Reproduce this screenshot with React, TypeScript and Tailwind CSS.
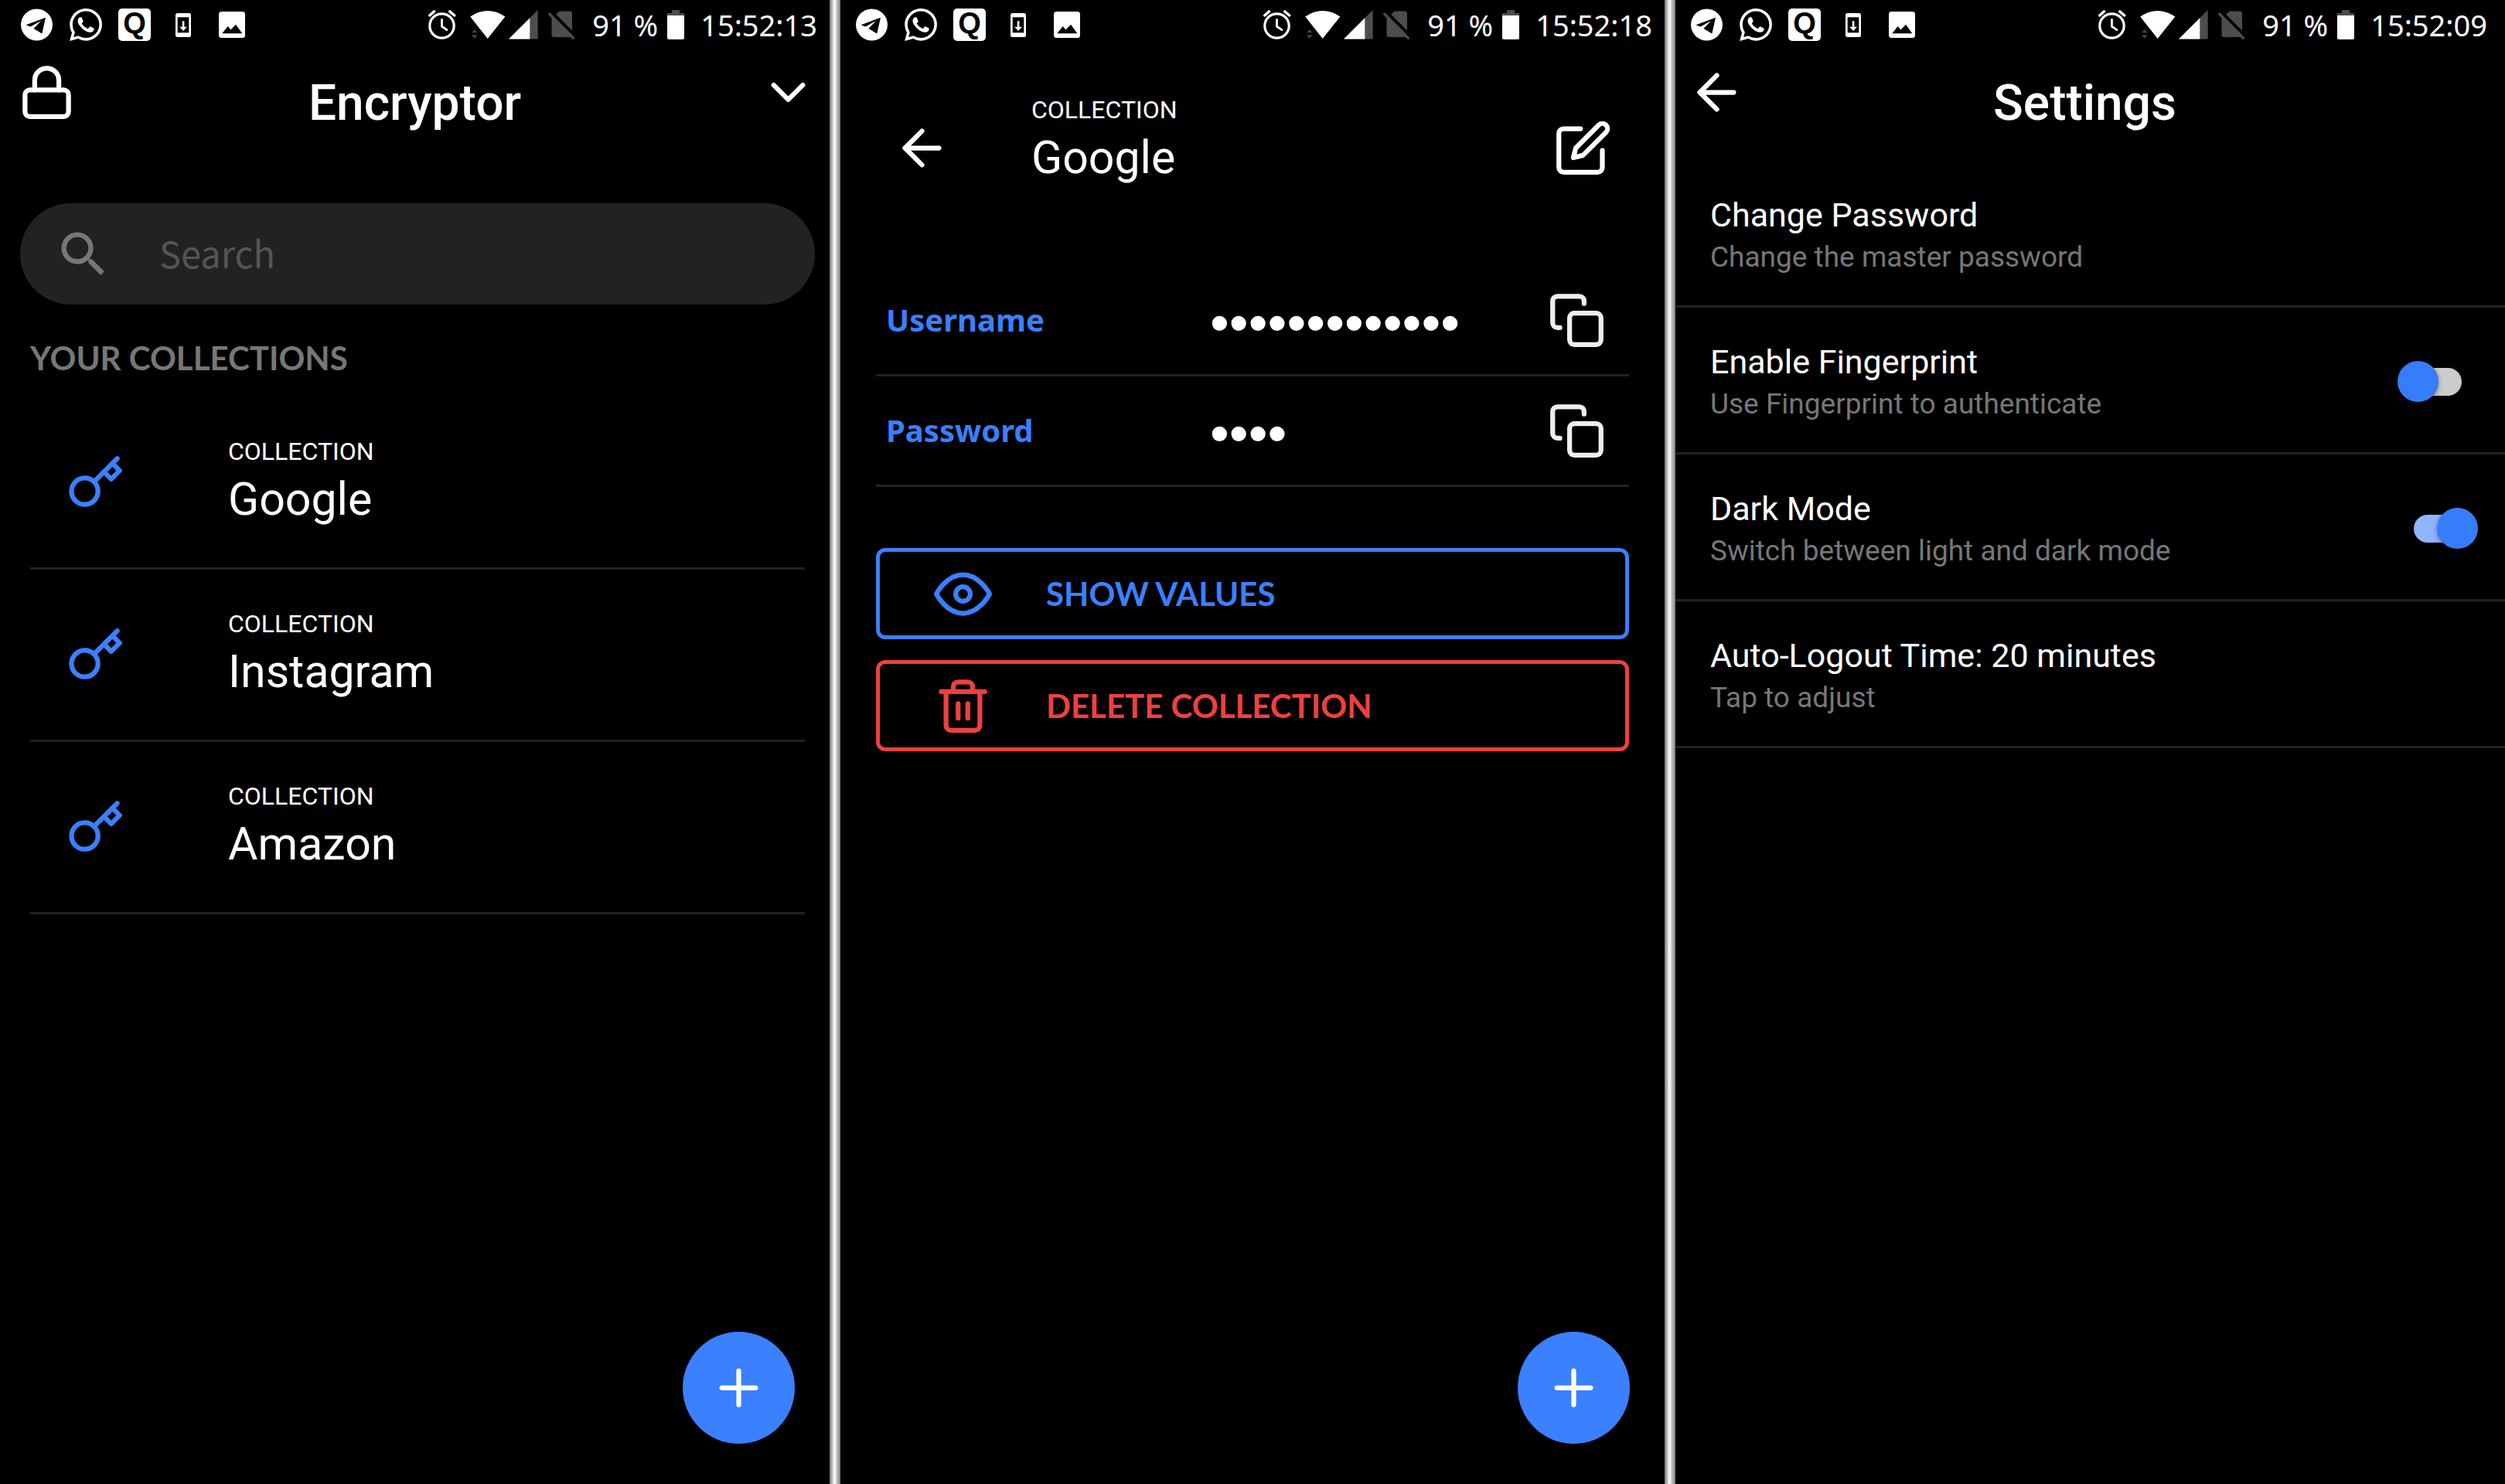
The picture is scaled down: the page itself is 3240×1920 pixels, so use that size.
import React from 'react';
import type { ReactNode } from 'react';
import { FiArrowLeft, FiChevronDown, FiCopy, FiEdit, FiEye, FiKey, FiLock, FiPlus, FiTrash2 } from 'react-icons/fi';
import { MdSearch } from 'react-icons/md';
import { SiWhatsapp } from 'react-icons/si';

const ICON = 'size-[75px] shrink-0';

function TelegramIcon() {
  return (
    <svg viewBox="0 0 42 42" className="size-[42px]" aria-hidden="true">
      <circle cx="20.5" cy="21" r="20.5" fill="#fff" />
      <path d="M6.5 21.3 32 11.7 27.3 32.5 16.5 26 26 16 12.5 23.6Z" fill="#000" />
    </svg>
  );
}

function DownloadIcon() {
  return (
    <svg viewBox="0 0 20 31" className="h-[31px] w-5" aria-hidden="true">
      <rect width="20" height="31" rx="2.5" fill="#fff" />
      <rect x="2.7" y="5.3" width="14.6" height="20" fill="#000" />
      <path d="M8.8 10.3h2.6v7.4H15L10.1 23 5.2 17.7h3.6Z" fill="#fff" />
    </svg>
  );
}

function ImageIcon() {
  return (
    <svg viewBox="0 0 34 34" className="size-[34px]" aria-hidden="true">
      <rect width="34" height="34" rx="3.5" fill="#fff" />
      <path d="M4.3 28.3 11.7 19l3.8 4.6L22 16.7l8.3 11.6Z" fill="#000" />
    </svg>
  );
}

function AlarmIcon() {
  return (
    <svg viewBox="0 0 36 38" className="h-[38px] w-9" fill="none" stroke="#fff" strokeLinecap="round" aria-hidden="true">
      <circle cx="17.5" cy="20.5" r="15.7" strokeWidth="3.2" />
      <path d="M17.5 12.5v8.7l6.5 4.5" strokeWidth="2.8" />
      <path d="M1.7 7 7.5 1.9M27.7 1.9 33.8 7" strokeWidth="3.4" />
    </svg>
  );
}

function WifiIcon() {
  return (
    <svg viewBox="0 0 46 38" className="h-[38px] w-[46px]" aria-hidden="true">
      <path d="M.2 8.4Q22.7-6.4 45.4 8.4L22.7 37Z" fill="#fff" />
      <path d="m5.7 25.3 4 4H1.9ZM1.9 32.3h7.8l-4 4.4Z" fill="#444" />
    </svg>
  );
}

function SignalIcon() {
  return (
    <svg viewBox="0 0 38 38" className="size-[38px]" aria-hidden="true">
      <path d="M0 37.5 37.6 0v37.5Z" fill="#4d4d4d" />
      <path d="M0 37.5 27.3 10.2v27.3Z" fill="#fff" />
    </svg>
  );
}

function NoSimIcon() {
  return (
    <svg viewBox="0 0 34 38" className="h-[38px] w-[34px]" aria-hidden="true">
      <path d="M4.5 11.5 14 2q.6-.5 1.5-.5H28q3 0 3 3V32q0 3-3 3H7.5q-3 0-3-3Z" fill="#4d4d4d" />
      <path d="M3 1.5 35 33.4" stroke="#000" strokeWidth="4" />
      <path d="M1.8 5.3 32.3 36.2" stroke="#4d4d4d" strokeWidth="3.4" strokeLinecap="round" />
    </svg>
  );
}

function BatteryIcon() {
  return (
    <svg viewBox="0 0 22 38" className="h-[38px] w-[22px]" aria-hidden="true">
      <path d="M6 0h10v4h6v4H0V4h6Z" fill="#4d4d4d" />
      <path d="M0 7h22v29q0 2-2 2H2q-2 0-2-2Z" fill="#fff" />
    </svg>
  );
}

function StatusBar({ time }: { time: string }) {
  return (
    <div className="flex h-16 items-center justify-between pr-[23px] pl-[27px]">
      <div className="flex items-center gap-[21px]">
        <TelegramIcon />
        <SiWhatsapp className="size-[42px]" />
        <span className="flex size-[42px] items-center justify-center rounded-[5px] bg-white pb-1 font-['Liberation_Sans'] text-[38px] leading-none font-bold text-black">
          Q
        </span>
        <span className="flex w-[42px] justify-center">
          <DownloadIcon />
        </span>
        <span className="flex w-[42px] justify-center">
          <ImageIcon />
        </span>
      </div>
      <div className="flex items-center font-['Noto_Sans'] text-[38px] leading-none">
        <AlarmIcon />
        <span className="ml-[18px] flex gap-1">
          <WifiIcon />
          <SignalIcon />
        </span>
        <span className="ml-[13px]">
          <NoSimIcon />
        </span>
        <span className="ml-[23px]">91 %</span>
        <span className="ml-3">
          <BatteryIcon />
        </span>
        <time className="ml-[21px]">{time}</time>
      </div>
    </div>
  );
}

function Phone({ time, children }: { time: string; children: ReactNode }) {
  return (
    <section className="flex min-w-0 flex-1 flex-col">
      <StatusBar time={time} />
      {children}
    </section>
  );
}

function Separator() {
  return (
    <div className="z-10 -mx-[7px] w-[14px] shrink-0 bg-linear-to-r from-[#777] via-white via-45% to-[#777]" />
  );
}

function TitleBar({ title, left, right }: { title: string; left: ReactNode; right?: ReactNode }) {
  return (
    <header className="grid grid-cols-[75px_1fr_75px] items-start px-[23px] pt-[18px]">
      {left}
      <h1 className="pt-3 pr-[7px] text-center text-[64px] leading-[80px] font-medium">{title}</h1>
      {right}
    </header>
  );
}

function CollectionName({ name }: { name: string }) {
  return (
    <span className="flex flex-col gap-2 pb-1 text-left">
      <span className="text-[32px] leading-10">COLLECTION</span>
      <span className="text-[59px] leading-[68px]">{name}</span>
    </span>
  );
}

function AddButton() {
  return (
    <button
      aria-label="Add"
      className="mt-auto mr-[52px] mb-[52px] flex size-[145px] items-center justify-center self-end rounded-full bg-[#3a80ff]"
    >
      <FiPlus className={ICON} />
    </button>
  );
}

function CollectionsScreen() {
  return (
    <Phone time="15:52:13">
      <TitleBar
        title="Encryptor"
        left={
          <button aria-label="Lock">
            <FiLock className={ICON} />
          </button>
        }
        right={
          <button aria-label="More">
            <FiChevronDown className={ICON} />
          </button>
        }
      />
      <label className="mx-[26px] mt-[89px] flex h-[131px] items-center gap-[60px] rounded-full bg-[#222] px-11">
        <MdSearch className="size-[76px] shrink-0 text-[#777]" />
        <input
          type="search"
          aria-label="Search"
          placeholder="Search"
          className="min-w-0 flex-1 bg-transparent pb-1 font-['Noto_Sans_CJK_SC',sans-serif] text-[47px] leading-[60px] outline-none placeholder:text-[#555]"
        />
      </label>
      <h2 className="mx-[39px] mt-[44px] mb-[26px] font-['Lato'] text-[42px] leading-[50px] font-bold text-[#777]">
        YOUR COLLECTIONS
      </h2>
      <ul className="mx-[39px]">
        {['Google', 'Instagram', 'Amazon'].map((name) => (
          <li key={name} className="border-b-[3px] border-[#222]">
            <button className="flex w-full items-center gap-[134px] py-[50px] pl-[47px]">
              <FiKey className="size-[75px] shrink-0 text-[#3a80ff]" />
              <CollectionName name={name} />
            </button>
          </li>
        ))}
      </ul>
      <AddButton />
    </Phone>
  );
}

const fields = [
  { id: 'username', label: 'Username', value: 'abcdefghijklm' },
  { id: 'password', label: 'Password', value: 'abcd' },
];

function DetailScreen() {
  return (
    <Phone time="15:52:18">
      <header className="flex items-center px-[75px] pt-[58px]">
        <button aria-label="Back">
          <FiArrowLeft className={ICON} />
        </button>
        <h1 className="flex-1 pb-[18px] pl-[104px]">
          <CollectionName name="Google" />
        </h1>
        <button aria-label="Edit">
          <FiEdit className={ICON} />
        </button>
      </header>
      <div className="mx-[53px] mt-[84px]">
        {fields.map((f) => (
          <div key={f.id} className="flex h-[143px] items-center border-b-[3px] border-[#222] pr-[30px] pl-[13px]">
            <label
              htmlFor={f.id}
              className="w-[419px] shrink-0 font-['Noto_Sans'] text-[40px] leading-[56px] font-bold text-[#3a80ff]"
            >
              {f.label}
            </label>
            <input
              id={f.id}
              type="password"
              readOnly
              defaultValue={f.value}
              className="min-w-0 flex-1 bg-transparent pt-2 font-['Liberation_Sans'] text-[71px] leading-[84px] outline-none"
            />
            <button aria-label={`Copy ${f.label}`} className="text-[#eee]">
              <FiCopy className="size-[75px] shrink-0 rotate-0" />
            </button>
          </div>
        ))}
      </div>
      <div className="mx-[53px] mt-[79px] flex flex-col gap-[27px] font-['Lato'] text-[42px] leading-[50px] font-bold">
        <button className="flex h-[118px] items-center gap-[70px] rounded-xl border-[5px] border-[#3a80ff] pl-[70px] text-[#3a80ff]">
          <FiEye className={ICON} />
          SHOW VALUES
        </button>
        <button className="flex h-[118px] items-center gap-[70px] rounded-xl border-[5px] border-[#ef4040] pl-[70px] text-[#ef4040]">
          <FiTrash2 className={ICON} />
          DELETE COLLECTION
        </button>
      </div>
      <AddButton />
    </Phone>
  );
}

function SettingText({ title, hint }: { title: string; hint: string }) {
  return (
    <span className="flex flex-col gap-2 text-left">
      <span className="text-[43px] leading-[50px]">{title}</span>
      <span className="text-[37px] leading-[44px] text-[#777]">{hint}</span>
    </span>
  );
}

const ROW = 'flex w-full items-center justify-between border-b-[3px] border-[#222] pt-[45px] pr-[45px] pb-[40px] pl-[52px]';

function SwitchRow({ title, hint, on }: { title: string; hint: string; on: boolean }) {
  return (
    <label className={ROW}>
      <SettingText title={title} hint={hint} />
      <input
        type="checkbox"
        role="switch"
        defaultChecked={on}
        className="relative mr-[11px] h-9 w-[73px] shrink-0 appearance-none rounded-full bg-[#ccc] before:absolute before:top-[-9px] before:left-[-10px] before:size-[53px] before:rounded-full before:bg-[#367dfb] before:shadow-[0_2px_6px_rgba(0,0,0,0.4)] checked:mr-0 checked:bg-[#90b5ff] checked:before:right-[-10px] checked:before:left-auto"
      />
    </label>
  );
}

function SettingsScreen() {
  return (
    <Phone time="15:52:09">
      <TitleBar
        title="Settings"
        left={
          <button aria-label="Back">
            <FiArrowLeft className={ICON} />
          </button>
        }
      />
      <div className="mt-[34px]">
        <button className={ROW}>
          <SettingText title="Change Password" hint="Change the master password" />
        </button>
        <SwitchRow title="Enable Fingerprint" hint="Use Fingerprint to authenticate" on={false} />
        <SwitchRow title="Dark Mode" hint="Switch between light and dark mode" on />
        <button className={ROW}>
          <SettingText title="Auto-Logout Time: 20 minutes" hint="Tap to adjust" />
        </button>
      </div>
    </Phone>
  );
}

export default function App() {
  return (
    <main className="flex min-h-screen bg-black font-['Roboto',sans-serif] text-white">
      <CollectionsScreen />
      <Separator />
      <DetailScreen />
      <Separator />
      <SettingsScreen />
    </main>
  );
}
